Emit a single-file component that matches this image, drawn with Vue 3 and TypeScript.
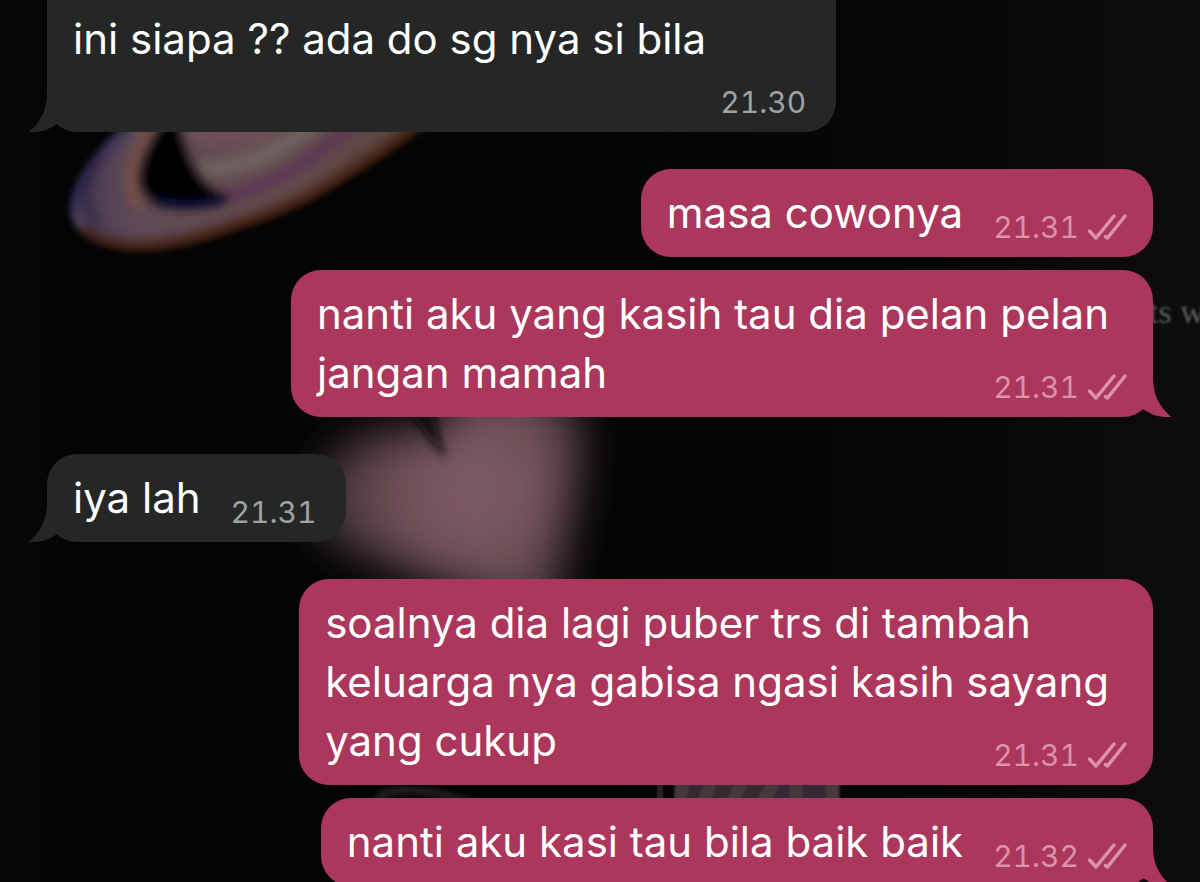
<script setup lang="ts">
interface Message {
  id: number
  lines: string[]
  time: string
  mine: boolean
  tail: boolean
  layout: 'inline' | 'overlay' | 'stacked'
  groupStart: boolean
}

const messages: Message[] = [
  { id: 1, lines: ['ini siapa ?? ada do sg nya si bila'], time: '21.30', mine: false, tail: true, layout: 'stacked', groupStart: false },
  { id: 2, lines: ['masa cowonya'], time: '21.31', mine: true, tail: false, layout: 'inline', groupStart: true },
  { id: 3, lines: ['nanti aku yang kasih tau dia pelan pelan', 'jangan mamah'], time: '21.31', mine: true, tail: true, layout: 'overlay', groupStart: false },
  { id: 4, lines: ['iya lah'], time: '21.31', mine: false, tail: true, layout: 'inline', groupStart: true },
  { id: 5, lines: ['soalnya dia lagi puber trs di tambah', 'keluarga nya gabisa ngasi kasih sayang', 'yang cukup'], time: '21.31', mine: true, tail: false, layout: 'overlay', groupStart: true },
  { id: 6, lines: ['nanti aku kasi tau bila baik baik'], time: '21.32', mine: true, tail: true, layout: 'inline', groupStart: false },
]
</script>

<template>
  <main class="chat">
    <svg class="wallpaper" viewBox="0 0 1200 882" preserveAspectRatio="xMinYMin slice" aria-hidden="true">
      <defs>
        <linearGradient id="night" x1="0" x2="1" y1="0" y2="0">
          <stop offset="0" stop-color="#090708" />
          <stop offset="0.06" stop-color="#050405" />
          <stop offset="0.5" stop-color="#040404" />
          <stop offset="0.8" stop-color="#080707" />
          <stop offset="1" stop-color="#0e0c0d" />
        </linearGradient>
        <linearGradient id="ring" gradientUnits="userSpaceOnUse" x1="75" y1="170" x2="400" y2="170">
          <stop offset="0" stop-color="#473c55" />
          <stop offset="0.2" stop-color="#5f4a55" />
          <stop offset="0.6" stop-color="#624c4e" />
          <stop offset="1" stop-color="#5c4440" />
        </linearGradient>
        <radialGradient id="heart" gradientUnits="userSpaceOnUse" cx="475" cy="490" r="150">
          <stop offset="0" stop-color="#7d5c6a" />
          <stop offset="0.4" stop-color="#76545d" />
          <stop offset="1" stop-color="#443538" />
        </radialGradient>
        <filter id="soft1" x="-20%" y="-20%" width="140%" height="140%"><feGaussianBlur stdDeviation="1" /></filter>
        <filter id="soft3" x="-20%" y="-20%" width="140%" height="140%"><feGaussianBlur stdDeviation="3" /></filter>
        <filter id="soft5" x="-30%" y="-30%" width="160%" height="160%"><feGaussianBlur stdDeviation="5" /></filter>
        <filter id="soft22" x="-40%" y="-40%" width="180%" height="180%"><feGaussianBlur stdDeviation="22" /></filter>
        <clipPath id="planetClip">
          <path d="M134 115C92 150 68 188 70 211C73 238 104 253 150 251C185 248 215 238 240 229C270 220 300 208 335 187C365 168 395 152 440 115Z" />
        </clipPath>
      </defs>
      <rect width="1200" height="882" fill="url(#night)" />

      <g filter="url(#soft3)">
        <g clip-path="url(#planetClip)">
          <rect x="50" y="100" width="400" height="170" fill="url(#ring)" />
          <g fill="none" filter="url(#soft5)">
            <path d="M134 115C92 150 68 188 70 211" stroke="#28274f" stroke-width="14" />
            <path d="M80 232C92 247 118 252 150 251C185 248 215 238 240 229C270 220 300 208 335 187C365 168 395 152 440 115" stroke="#3f1f10" stroke-width="20" />
            <path d="M158 120C128 165 124 194 142 206" stroke="#7c5145" stroke-width="12" />
            <path d="M215 198C280 190 320 150 365 115" stroke="#5b3358" stroke-width="10" />
            <path d="M200 170C255 168 290 142 325 118" stroke="#706260" stroke-width="16" />
            <path d="M190 120C195 138 225 142 275 125" stroke="#704f5a" stroke-width="22" />
            <path d="M102 155C80 187 84 212 99 224" stroke="#2f2440" stroke-width="7" />
          </g>
          <path d="M170 112C146 148 134 176 144 192C156 213 205 212 231 198C205 191 187 172 176 112Z" fill="#050306" filter="url(#soft5)" />
          <path d="M158 199C175 209 200 208 220 198" fill="none" stroke="#07103c" stroke-width="10" filter="url(#soft5)" />
        </g>
      </g>

      <path d="M318 480C345 430 400 425 435 436C450 370 545 360 578 415C588 470 560 540 552 640C485 590 400 575 355 550C315 535 300 510 318 480Z" fill="url(#heart)" filter="url(#soft22)" />
      <path d="M404 405L430 405L446 460Z" fill="#0d090a" filter="url(#soft5)" />

      <path d="M374 808C380 782 425 787 480 806" fill="none" stroke="#2a2527" stroke-width="6" filter="url(#soft3)" />
      <g fill="none" filter="url(#soft1)">
        <path d="M674 792H840" stroke="#352b30" stroke-width="24" />
        <path d="M660 780V808" stroke="#2a2226" stroke-width="6" />
        <path d="M684 780L678 808M712 780L700 808M744 780L728 808M776 780L758 808M796 780V808M832 780V808" stroke="#463940" stroke-width="12" />
      </g>
      <text class="wallpaper-text" x="1149" y="323" filter="url(#soft1)">ts w</text>
    </svg>

    <ol class="thread">
      <li
        v-for="message in messages"
        :key="message.id"
        class="row"
        :class="{ mine: message.mine, 'group-start': message.groupStart }"
      >
        <article class="bubble" :class="message.layout">
          <svg v-if="message.tail" class="tail" viewBox="0 0 30 40" aria-hidden="true">
            <path d="M18 0C18 18 12 29 0 40C12 41 21 37 28 32L30 0Z" />
          </svg>
          <p class="text">
            <span v-for="line in message.lines" :key="line" class="line">{{ line }}</span>
          </p>
          <footer class="meta">
            <time>{{ message.time }}</time>
            <svg v-if="message.mine" class="ticks" viewBox="0 0 40 28" role="img" aria-label="Delivered">
              <path d="M2.500 18L9 25L27 3M18.500 23.500L20.500 25L38 3" />
            </svg>
          </footer>
        </article>
      </li>
    </ol>
  </main>
</template>

<style>
body {
  margin: 0;
  background: #050505;
}
</style>

<style scoped>
.chat {
  position: relative;
  height: 100vh;
  overflow: hidden;
  font-family: Inter, "Liberation Sans", sans-serif;
}

.wallpaper {
  position: absolute;
  inset: 0;
  width: 100%;
  height: 100%;
}

.wallpaper-text {
  font-family: "Liberation Serif", serif;
  font-size: 34px;
  fill: #5c5a5a;
}

.thread {
  position: relative;
  display: flex;
  flex-direction: column;
  gap: 13px;
  margin: 0;
  padding: 0 47px;
  list-style: none;
}

.row {
  display: flex;
}

.row.mine {
  justify-content: flex-end;
}

.row.group-start {
  margin-top: 24px;
}

.bubble {
  position: relative;
  display: flex;
  box-sizing: border-box;
  padding: 14px 30px 15px 26px;
  border-radius: 30px;
  background: #252726;
  color: #ffffff;
}

.mine .bubble {
  padding-right: 26px;
  background: #ab375c;
}

.bubble.inline {
  gap: 30px;
}

.bubble.overlay {
  display: grid;
}

.overlay .text,
.overlay .meta {
  grid-area: 1 / 1;
}

.overlay .text {
  padding-right: 18px;
}

.bubble.stacked {
  flex-direction: column;
  padding-top: 9px;
  border-radius: 0 0 30px 30px;
}

.stacked .text {
  padding-right: 100px;
}

.text {
  margin: 0;
  font-size: 42px;
  line-height: 59px;
  white-space: nowrap;
}

.line {
  display: block;
}

.meta {
  display: flex;
  align-items: center;
  align-self: end;
  justify-self: end;
  gap: 8px;
  height: 30px;
  font-size: 30px;
  font-variant-numeric: tabular-nums;
  line-height: 30px;
  color: #a0a1a1;
}

.stacked .meta {
  margin-top: 19px;
}

.mine .meta {
  color: #dc92ac;
}

.ticks {
  width: 40px;
  height: 28px;
  fill: none;
  stroke: currentColor;
  stroke-width: 3.5;
  stroke-linecap: round;
  stroke-linejoin: round;
}

.tail {
  position: absolute;
  bottom: 0;
  left: -18px;
  width: 30px;
  height: 40px;
  fill: #252726;
}

.mine .tail {
  right: -18px;
  left: auto;
  fill: #ab375c;
  transform: scaleX(-1);
}
</style>
